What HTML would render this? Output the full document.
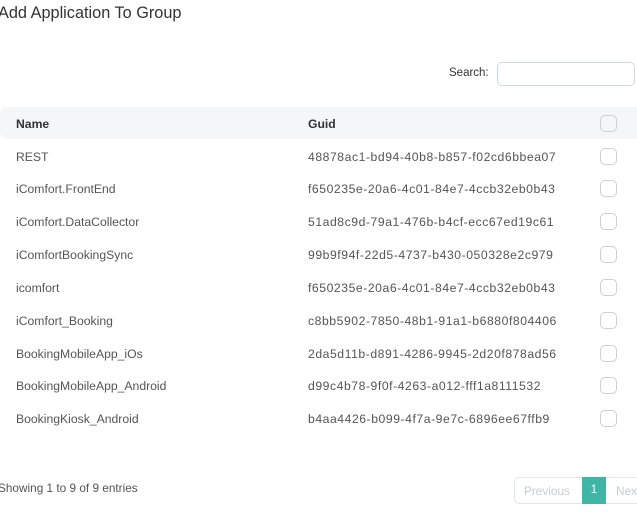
<!DOCTYPE html><html><head><style>
body{margin:0;width:637px;height:527px;overflow:hidden;background:#fff;font-family:"Liberation Sans",sans-serif;position:relative;color:#555}
.a{position:absolute;white-space:nowrap}
.t{left:-2px;top:4px;font-size:16.3px;color:#333}
.row{position:absolute;left:0;width:637px;height:33px;font-size:12.2px;color:#555}
.row span{position:absolute;top:10px}
.row span+span{letter-spacing:0.55px}
.cb{position:absolute;left:600px;top:8px;width:15px;height:15px;border:1.3px solid #c9d0d8;border-radius:5px}
</style></head><body>
<div class="a t">Add Application To Group</div>
<div class="a" style="left:449px;top:67px;font-size:11.5px;color:#333">Search:</div>
<div class="a" style="left:497px;top:62px;width:136px;height:22px;border:1.3px solid #cfd8e0;border-radius:5px"></div>
<div class="row" style="top:107px;height:32px;background:#f4f6f8;border-radius:7px 0 0 7px;font-weight:bold;color:#333"><span style="left:16px">Name</span><span style="left:308px;letter-spacing:0">Guid</span><div class="cb" style="top:8px"></div></div>
<div class="row" style="top:140px"><span style="left:16px">REST</span><span style="left:308px">48878ac1-bd94-40b8-b857-f02cd6bbea07</span><div class="cb"></div></div>
<div class="row" style="top:172px"><span style="left:16px">iComfort.FrontEnd</span><span style="left:308px">f650235e-20a6-4c01-84e7-4ccb32eb0b43</span><div class="cb"></div></div>
<div class="row" style="top:205px"><span style="left:16px">iComfort.DataCollector</span><span style="left:308px">51ad8c9d-79a1-476b-b4cf-ecc67ed19c61</span><div class="cb"></div></div>
<div class="row" style="top:238px"><span style="left:16px">iComfortBookingSync</span><span style="left:308px">99b9f94f-22d5-4737-b430-050328e2c979</span><div class="cb"></div></div>
<div class="row" style="top:271px"><span style="left:16px">icomfort</span><span style="left:308px">f650235e-20a6-4c01-84e7-4ccb32eb0b43</span><div class="cb"></div></div>
<div class="row" style="top:304px"><span style="left:16px">iComfort_Booking</span><span style="left:308px">c8bb5902-7850-48b1-91a1-b6880f804406</span><div class="cb"></div></div>
<div class="row" style="top:337px"><span style="left:16px">BookingMobileApp_iOs</span><span style="left:308px">2da5d11b-d891-4286-9945-2d20f878ad56</span><div class="cb"></div></div>
<div class="row" style="top:369px"><span style="left:16px">BookingMobileApp_Android</span><span style="left:308px">d99c4b78-9f0f-4263-a012-fff1a8111532</span><div class="cb"></div></div>
<div class="row" style="top:402px"><span style="left:16px">BookingKiosk_Android</span><span style="left:308px">b4aa4426-b099-4f7a-9e7c-6896ee67ffb9</span><div class="cb"></div></div>
<div class="a" style="left:-2px;top:481px;font-size:11.8px;color:#555">Showing 1 to 9 of 9 entries</div>
<div class="a" style="left:514px;top:477px;width:130px;height:25px;border:1px solid #dfe5ea;border-radius:5px"></div>
<div class="a" style="left:524px;top:484px;font-size:11.8px;color:#c6ccd2">Previous</div>
<div class="a" style="left:582px;top:477px;width:24px;height:27px;background:#3eb5a5;color:#fff;font-size:11.5px;text-align:center;line-height:27px">1</div>
<div class="a" style="left:616px;top:484px;font-size:11.8px;color:#c6ccd2">Next</div>
</body></html>
